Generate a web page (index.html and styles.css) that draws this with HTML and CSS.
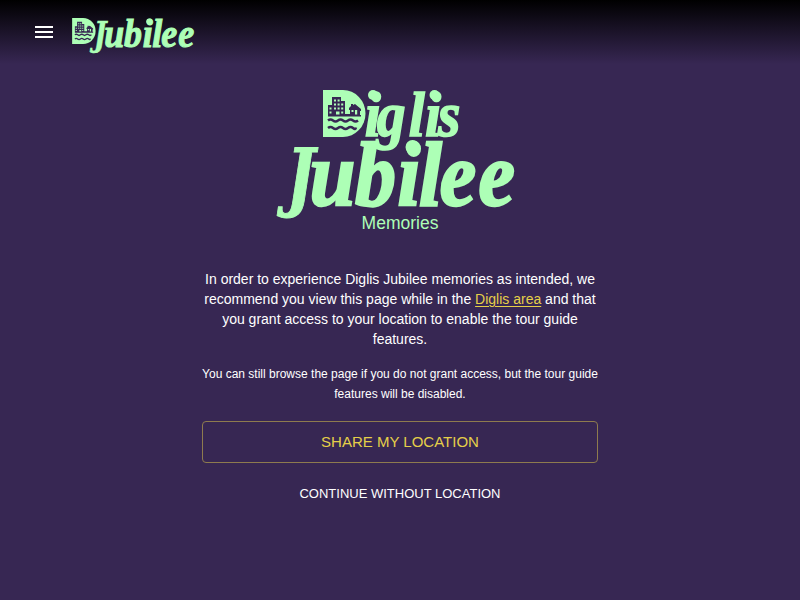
FILE: index.html
```html
<!DOCTYPE html>
<html lang="en">
<head>
<meta charset="utf-8">
<title>Diglis Jubilee Memories</title>
<link rel="stylesheet" href="styles.css">
</head>
<body>
<svg class="defs" aria-hidden="true">
  <defs>
    <symbol id="badge" viewBox="0 0 43 47">
      <path class="mint" d="M0 0H20A22.500 23.500 0 0 1 20 47H0Z"/>
      <path class="ink" d="M5 15h4V7h9v4h4v13h5v-4h-1v-2l2-2v-2h2v1l2-1 6 5v2h-1v4h1v1.500H5Z"/>
      <path class="mint" d="M11 9.500h2v2h-2zm3.600 0h2v2h-2zM11 13.500h2v2h-2zm3.600 0h2v2h-2zm3.600 0h2v2h-2zM6.500 17.500h2v2h-2zm4.500 0h2v2h-2zm3.600 0h2v2h-2zm3.600 0h2v2h-2zM6.500 21.500h2v2h-2zm6.500 0h3.500v3h-3.500zm5.200 0h2v2h-2zM28.500 20h2v2h-2zm3.500 0h2.200v4.500H32z"/>
      <path class="wave" d="M5 30.500q2.500-2.200 5 0t5 0 5 0 5 0 5 0 5 0M5 38q2.500-2.200 5 0t5 0 5 0 5 0 5 0 3-.5"/>
    </symbol>
    <symbol id="jubilee" viewBox="276 138 242 82" overflow="visible">
      <text class="word tail" transform="translate(286.500 202) scale(.8 1)" font-size="75">J</text>
      <text class="word" transform="translate(284 205) scale(.9 1)" font-size="91" x="28.500 79 126 150 173 216">ubilee</text>
      <circle class="mint" cx="412.500" cy="147" r="7"/>
    </symbol>
  </defs>
</svg>
<header class="bar">
  <button class="menu" aria-label="Menu"><span></span><span></span><span></span></button>
  <svg class="brand" viewBox="0 0 124 36" role="img" aria-label="Diglis Jubilee">
    <use href="#badge" x="0" y="0" width="24" height="26"/>
    <use href="#jubilee" x="17" y="-.5" width="107" height="36"/>
  </svg>
</header>
<main class="intro">
  <svg class="logo" viewBox="276 88 242 132" role="img" aria-label="Diglis Jubilee">
    <use href="#badge" x="323" y="90" width="43" height="47"/>
    <text class="word small" transform="translate(362 135.500) scale(.9 1)" font-size="64" x="3 16.500 52 70 84.500">iglis</text>
    <circle class="mint" cx="373" cy="95" r="5"/>
    <circle class="mint" cx="434.500" cy="95" r="5"/>
    <use href="#jubilee" x="276" y="138" width="242" height="82"/>
  </svg>
  <h1 class="title">Memories</h1>
  <p class="lead">In order to experience Diglis Jubilee memories as intended, we recommend you view this page while in the <a href="#">Diglis area</a> and that you grant access to your location to enable the tour guide features.</p>
  <p class="note">You can still browse the page if you do not grant access, but the tour guide features will be disabled.</p>
  <button class="share">SHARE MY LOCATION</button>
  <button class="skip">CONTINUE WITHOUT LOCATION</button>
</main>
</body>
</html>
```
FILE: styles.css
```css
* { box-sizing: border-box; }
body {
  margin: 0;
  min-height: 100vh;
  background: #372753;
  color: #fff;
  font-family: "Liberation Sans", Arial, sans-serif;
}
button { font: inherit; color: inherit; background: none; border: 0; padding: 0; }
.defs { display: block; width: 0; height: 0; }
.bar {
  display: flex;
  align-items: center;
  height: 64px;
  padding-left: 35px;
  gap: 19px;
  background: linear-gradient(#000, #372753);
}
.menu { display: flex; flex-direction: column; gap: 3px; width: 18px; }
.menu span { height: 2px; background: #fff; }
.brand { width: 124px; height: 36px; margin-top: 7px; overflow: visible; }
.mint, .word { fill: #adffb6; }
.ink { fill: #372753; }
.wave { fill: none; stroke: #372753; stroke-width: 2.400; }
.word {
  font-family: "Liberation Serif", "Times New Roman", serif;
  font-weight: bold;
  font-style: italic;
  stroke: #adffb6;
  stroke-width: 2.500;
}
.small { stroke-width: 1.600; }
.tail { font-family: "DejaVu Serif", serif; stroke-width: 1; }
.intro {
  display: flex;
  flex-direction: column;
  align-items: center;
  width: 396px;
  margin: 24px auto 0;
  text-align: center;
}
.logo { width: 242px; height: 132px; margin-right: 6px; overflow: visible; }
.title { margin: -7px 0 0; font-size: 17.500px; line-height: 20px; font-weight: 400; color: #adffb6; }
.lead { margin: 36px 0 0; font-size: 14px; line-height: 20px; }
.lead a { color: #e5cf49; text-underline-offset: 2px; }
.note { margin: 15px 0 0; font-size: 12px; line-height: 20px; }
.share {
  width: 100%;
  height: 42px;
  margin-top: 17px;
  padding-bottom: 2px;
  border: 1px solid #8e7b4e;
  border-radius: 4px;
  color: #e5cf49;
  font-size: 15px;
}
.skip { margin-top: 20px; font-size: 13px; line-height: 22px; }
```
